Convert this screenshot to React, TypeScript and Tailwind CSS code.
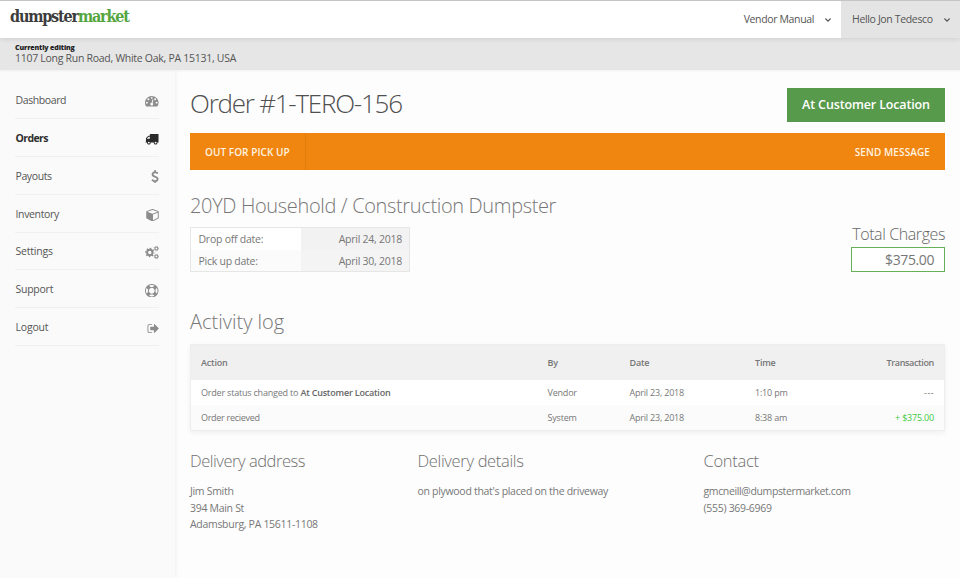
import React from "react";

const paths = {
  dashboard:
    "M384 1152q0-53-37.5-90.5t-90.5-37.5-90.5 37.5-37.5 90.5 37.5 90.5 90.5 37.5 90.5-37.5 37.5-90.5zm192-448q0-53-37.5-90.5t-90.5-37.5-90.5 37.5-37.5 90.5 37.5 90.5 90.5 37.5 90.5-37.5 37.5-90.5zm428 481l101-382q6-26-7.5-48.5t-38.5-29.5-48 6.5-30 39.5l-101 382q-60 5-107 43.5t-63 98.5q-20 77 20 146t117 89 146-20 89-117q16-60-6-117t-72-91zm660-33q0-53-37.5-90.5t-90.5-37.5-90.5 37.5-37.5 90.5 37.5 90.5 90.5 37.5 90.5-37.5 37.5-90.5zm-640-640q0-53-37.5-90.5t-90.5-37.5-90.5 37.5-37.5 90.5 37.5 90.5 90.5 37.5 90.5-37.5 37.5-90.5zm448 192q0-53-37.5-90.5t-90.5-37.5-90.5 37.5-37.5 90.5 37.5 90.5 90.5 37.5 90.5-37.5 37.5-90.5zm320 448q0 261-141 483-19 29-54 29h-1402q-35 0-54-29-141-221-141-483 0-182 71-348t191-286 286-191 348-71 348 71 286 191 191 286 71 348z",
  truck:
    "M640 1408q0-52-38-90t-90-38-90 38-38 90 38 90 90 38 90-38 38-90zm-384-512h384v-256h-158q-13 0-22 9l-195 195q-9 9-9 22v30zm1280 512q0-52-38-90t-90-38-90 38-38 90 38 90 90 38 90-38 38-90zm256-1088v1024q0 15-4 26.5t-13.5 18.5-16.5 11.5-23.5 6-22.5 2-25.5 0-22.5-.5q0 106-75 181t-181 75-181-75-75-181h-384q0 106-75 181t-181 75-181-75-75-181h-64q-3 0-22.5.5t-25.5 0-22.5-2-23.5-6-16.5-11.5-13.5-18.5-4-26.5q0-26 19-45t45-19v-320q0-8-.5-35t0-38 2.5-34.5 6.5-37 14-30.5 22.5-30l198-198q19-19 50.5-32t58.5-13h160v-192q0-26 19-45t45-19h1024q26 0 45 19t19 45z",
  dollar:
    "M978 1185q0 153-99.5 263.5t-258.5 136.5v175q0 14-9 23t-23 9h-135q-13 0-22.5-9.5t-9.5-22.5v-175q-66-9-127.5-31t-101.5-44.5-74-48-46.5-37.5-17.5-18q-17-21-2-41l103-135q7-10 23-12 15-2 24 9l2 2q113 99 243 125 37 8 74 8 81 0 142.5-43t61.5-122q0-28-15-53t-33.5-42-58.5-37.5-66-32-80-32.5q-39-16-61.5-25t-61.5-26.5-62.5-31-56.5-35.5-53.5-42.5-43.5-49-35.5-58-21-66.5-8.5-78q0-138 98-242t255-134v-180q0-13 9.5-22.5t22.5-9.5h135q14 0 23 9t9 23v176q57 6 110.5 23t87 33.5 63.5 37.5 39 29 15 14q17 18 5 38l-81 146q-8 15-23 16-14 3-27-7-3-3-14.5-12t-39-26.5-58.5-32-74.5-26-85.5-11.5q-95 0-155 43t-60 111q0 26 8.5 48t29.5 41.5 39.5 33 56 31 60.5 27 70 27.5q53 20 81 31.5t76 35 75.5 42.5 62 50 53 63.5 31.5 76.5 13 94z",
  cube:
    "M896 1629l640-349v-636l-640 233v752zm-64-865l698-254-698-254-698 254zm832-252v768q0 35-18 65t-49 47l-704 384q-28 16-61 16t-61-16l-704-384q-31-17-49-47t-18-65v-768q0-40 23-73t61-47l704-256q22-8 44-8t44 8l704 256q38 14 61 47t23 73z",
  ring:
    "M896 0q182 0 348 71t286 191 191 286 71 348-71 348-191 286-286 191-348 71-348-71-286-191-191-286-71-348 71-348 191-286 286-191 348-71zm0 128q-190 0-361 90l194 194q82-28 167-28t167 28l194-194q-171-90-361-90zm-678 1129l194-194q-28-82-28-167t28-167l-194-194q-90 171-90 361t90 361zm678 407q190 0 361-90l-194-194q-82 28-167 28t-167-28l-194 194q171 90 361 90zm0-384q159 0 271.5-112.5t112.5-271.5-112.5-271.5-271.5-112.5-271.5 112.5-112.5 271.5 112.5 271.5 271.5 112.5zm484-217l194 194q90-171 90-361t-90-361l-194 194q28 82 28 167t-28 167z",
  logout:
    "M704 1440q0 4 1 20t.5 26.5-3 23.5-10 19.5-20.5 6.5h-320q-119 0-203.5-84.5t-84.5-203.5v-704q0-119 84.5-203.5t203.5-84.5h320q13 0 22.5 9.5t9.5 22.5q0 4 1 20t.5 26.5-3 23.5-10 19.5-20.5 6.5h-320q-66 0-113 47t-47 113v704q0 66 47 113t113 47h312l11.5 1 11.5 3 8 5.5 7 9 2 13.5zm928-544q0 26-19 45l-544 544q-19 19-45 19t-45-19-19-45v-288h-448q-26 0-45-19t-19-45v-384q0-26 19-45t45-19h448v-288q0-26 19-45t45-19 45 19l544 544q19 19 19 45z",
};

function Glyph({ d, box, className }: { d: string; box: string; className: string }) {
  return (
    <svg viewBox={box} fill="currentColor" className={className}>
      <path d={d} />
    </svg>
  );
}

function Gear({ cx, cy, r, w, tooth }: { cx: number; cy: number; r: number; w: number; tooth: number }) {
  const arc = (2 * Math.PI * (r + w / 2 + tooth / 2)) / 16;
  return (
    <g fill="none" stroke="currentColor">
      <circle cx={cx} cy={cy} r={r} strokeWidth={w} />
      <circle
        cx={cx}
        cy={cy}
        r={r + w / 2 + tooth / 2 - 0.05}
        strokeWidth={tooth + 0.1}
        strokeDasharray={`${arc} ${arc}`}
        strokeDashoffset={arc / 2}
      />
    </g>
  );
}

const nav = [
  { label: "Dashboard", track: "tracking-[-0.4px]", icon: <Glyph d={paths.dashboard} box="0 0 1792 1792" className="h-[13.5px] w-[13.5px]" /> },
  { label: "Orders", track: "tracking-[-0.6px]", active: true, icon: <Glyph d={paths.truck} box="0 0 1792 1792" className="h-[13.5px] w-[13.5px]" /> },
  { label: "Payouts", track: "tracking-[-0.4px]", icon: <Glyph d={paths.dollar} box="0 0 1024 1792" className="h-[13.5px] w-[8px]" /> },
  { label: "Inventory", track: "tracking-[-0.35px]", icon: <Glyph d={paths.cube} box="0 0 1664 1792" className="h-[13.5px] w-[13px]" /> },
  {
    label: "Settings",
    track: "tracking-[-0.2px]",
    icon: (
      <svg viewBox="0 0 14 13" className="h-[13px] w-[14px]">
        <Gear cx={4.8} cy={6.5} r={2.7} w={2} tooth={1} />
        <Gear cx={11.4} cy={2.5} r={1.5} w={1.1} tooth={0.6} />
        <Gear cx={11.4} cy={10.5} r={1.5} w={1.1} tooth={0.6} />
      </svg>
    ),
  },
  { label: "Support", track: "tracking-[-0.25px]", icon: <Glyph d={paths.ring} box="0 0 1792 1792" className="h-[13.5px] w-[13.5px]" /> },
  { label: "Logout", track: "tracking-[-0.2px]", icon: <Glyph d={paths.logout} box="0 0 1664 1792" className="h-[13px] w-[12px]" /> },
];

function Chevron() {
  return (
    <svg viewBox="0 0 6 4" className="h-[4px] w-[6px]" fill="none" stroke="#555" strokeWidth="1.1">
      <path d="M.4.5 3 3.1 5.6.5" />
    </svg>
  );
}

const cols = "grid grid-cols-[346.5px_82px_125.5px_100px_1fr] items-center px-[10px]";

export default function App() {
  return (
    <div className="flex h-[578px] w-[960px] flex-col overflow-hidden bg-[#fdfdfd] font-['Open_Sans','Noto_Sans',sans-serif] text-[#777]">
      <header className="z-20 flex h-[38px] shrink-0 justify-between border-t border-[#c4c4c4] bg-white shadow-[0_1px_5px_rgba(0,0,0,0.1)]">
        <div className="pl-[10px] pt-[5px] font-['DejaVu_Serif_Condensed','DejaVu_Serif',serif] text-[16px] leading-[22px] font-bold tracking-[-1.18px] text-[#3c3c3c]">
          dumpster<span className="text-[#55a63f]">market</span>
        </div>
        <div className="flex text-[10.5px] text-[#555]">
          <div className="flex items-center gap-[11px] pr-[10px]">
            <span className="pt-[1px] tracking-[-0.36px]">Vendor Manual</span>
            <Chevron />
          </div>
          <div className="flex w-[119px] items-center justify-between bg-[#e4e4e4] pr-[10px] pl-[11px]">
            <span className="pt-[1px] tracking-[-0.35px]">Hello Jon Tedesco</span>
            <Chevron />
          </div>
        </div>
      </header>

      <div className="z-10 h-[32px] shrink-0 bg-[#e6e6e6] pt-[4.5px] pl-[15px] shadow-[0_1px_2px_rgba(0,0,0,0.05)]">
        <div className="text-[7px] leading-[10px] font-extrabold tracking-[-0.13px] text-[#222]">Currently editing</div>
        <div className="text-[10.5px] leading-[10px] tracking-[-0.28px] text-[#555]">1107 Long Run Road, White Oak, PA 15131, USA</div>
      </div>

      <div className="flex min-h-0 flex-1">
        <aside className="w-[175px] shrink-0 bg-[#fafafa] pt-[11px] pr-[16px] pl-[15px] shadow-[0_0_5px_rgba(0,0,0,0.08)]">
          {nav.map((n) => (
            <div
              key={n.label}
              className={
                n.active
                  ? "flex h-[37.9px] items-center justify-between border-b border-[#f0f0f0] text-[10.5px] font-bold text-[#2e2e2e]"
                  : "flex h-[37.9px] items-center justify-between border-b border-[#f0f0f0] text-[10.5px] text-[#555]"
              }
            >
              <span className={`${n.track} pt-[2.6px] pl-[0.5px]`}>{n.label}</span>
              <span className={n.active ? "pt-[3px] pr-[0.5px] text-[#2a2a2a]" : "pt-[3px] pr-[0.5px] text-[#8c8c8c]"}>{n.icon}</span>
            </div>
          ))}
        </aside>

        <main className="flex-1 pr-[15px] pl-[15px]">
          <div className="flex h-[63px] items-center justify-between pt-[7px]">
            <h1 className="-mt-[4px] text-[26px] leading-[36px] font-light tracking-[-1.24px] text-[#505050]">Order #1-TERO-156</h1>
            <div className="flex h-[34px] w-[158px] items-center justify-center bg-[#579a4b] text-[12.5px] font-semibold tracking-[-0.14px] text-white">
              At Customer Location
            </div>
          </div>
          <div className="flex h-[37px] items-center justify-between bg-[#f0860f] pr-[15px] text-[10px] font-semibold text-[#fff3e2]">
            <div className="flex h-full w-[116px] items-center border-r border-[#e17d0c] pt-[2px] pl-[15px] tracking-[0.06px]">OUT FOR PICK UP</div>
            <div className="pt-[2px] tracking-[0.1px]">SEND MESSAGE</div>
          </div>

          <div className="flex h-[139px] justify-between">
            <div className="pt-[23px]">
              <h2 className="text-[20px] leading-[26px] font-light tracking-[-0.35px] text-[#777]">20YD Household / Construction Dumpster</h2>
              <div className="mt-[8px] grid h-[45px] w-[220px] grid-cols-[110px_1fr] grid-rows-[21.5px_21.5px] border border-[#e6e6e6] text-[10.5px] tracking-[-0.25px]">
                <div className="flex items-center bg-white pt-[3px] pl-[7.5px]">Drop off date:</div>
                <div className="flex items-center justify-end bg-[#f2f2f2] pt-[3px] pr-[7px]">April 24, 2018</div>
                <div className="flex items-center bg-[#fbfbfb] pt-[3px] pl-[7.5px]">Pick up date:</div>
                <div className="flex items-center justify-end bg-[#f4f4f4] pt-[3px] pr-[7px]">April 30, 2018</div>
              </div>
            </div>
            <div className="flex flex-col items-end pt-[53px]">
              <div className="text-[16px] leading-[22px] font-light whitespace-nowrap tracking-[-0.4px] text-[#666]">Total Charges</div>
              <div className="mt-[2px] flex h-[25px] w-[94px] items-center justify-end border border-[#66b057] bg-white pr-[10px] text-[14px] tracking-[-0.4px] text-[#777]">
                $375.00
              </div>
            </div>
          </div>

          <h2 className="text-[20px] leading-[26px] font-light text-[#777]">Activity log</h2>
          <div className="mt-[9px] h-[87px] border border-[#eee] bg-white text-[9px] tracking-[-0.2px] shadow-[0_2px_5px_rgba(0,0,0,0.06)]">
            <div className={`${cols} h-[35px] bg-[#f0f0f0] font-semibold text-[#777]`}>
              <span>Action</span>
              <span>By</span>
              <span>Date</span>
              <span>Time</span>
              <span className="text-right tracking-[-0.34px]">Transaction</span>
            </div>
            <div className={`${cols} h-[25px]`}>
              <span>
                Order status changed to <b className="font-semibold text-[#666]">At Customer Location</b>
              </span>
              <span>Vendor</span>
              <span>April 23, 2018</span>
              <span>1:10 pm</span>
              <span className="text-right tracking-[0.4px]">---</span>
            </div>
            <div className={`${cols} h-[25px] bg-[#fbfbfb]`}>
              <span className="tracking-[-0.28px]">Order recieved</span>
              <span>System</span>
              <span>April 23, 2018</span>
              <span>8:38 am</span>
              <span className="text-right font-medium text-[#3fca3f]">+ $375.00</span>
            </div>
          </div>

          <div className="mt-[20px] grid grid-cols-[227.5px_286px_1fr] text-[10.5px] leading-[16.5px] tracking-[-0.3px]">
            <div>
              <h3 className="mb-[12px] text-[16.5px] leading-[20px] font-light tracking-[-0.46px] text-[#707070]">Delivery address</h3>
              <p>Jim Smith</p>
              <p>394 Main St</p>
              <p>Adamsburg, PA 15611-1108</p>
            </div>
            <div>
              <h3 className="mb-[12px] text-[16.5px] leading-[20px] font-light tracking-[-0.33px] text-[#707070]">Delivery details</h3>
              <p>on plywood that's placed on the driveway</p>
            </div>
            <div>
              <h3 className="mb-[12px] text-[16.5px] leading-[20px] font-light tracking-[-0.3px] text-[#707070]">Contact</h3>
              <p className="tracking-[-0.36px]">gmcneill@dumpstermarket.com</p>
              <p>(555) 369-6969</p>
            </div>
          </div>
        </main>
      </div>
    </div>
  );
}
